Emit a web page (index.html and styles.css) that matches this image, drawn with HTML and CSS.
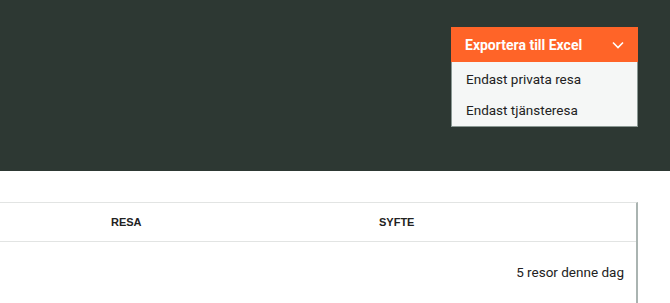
FILE: index.html
```html
<!DOCTYPE html>
<html lang="sv">
<head>
<meta charset="utf-8">
<link rel="stylesheet" href="styles.css">
</head>
<body>
<header class="top">
  <div class="export">
    <button class="export-btn">
      <span>Exportera till Excel</span>
      <svg class="chev" width="12" height="8" viewBox="0 0 12 8"><path d="M1 1.5 L6 6.5 L11 1.5" fill="none" stroke="#fff" stroke-width="1.6"/></svg>
    </button>
    <ul class="menu">
      <li>Endast privata resa</li>
      <li>Endast tjänsteresa</li>
    </ul>
  </div>
</header>
<main class="content">
  <div class="table">
    <div class="thead">
      <div class="th"></div>
      <div class="th">RESA</div>
      <div class="th">SYFTE</div>
    </div>
    <div class="tbody">
      <div class="summary">5 resor denne dag</div>
    </div>
  </div>
</main>
</body>
</html>
```

FILE: styles.css
```css
* { box-sizing: border-box; }
html, body { margin: 0; padding: 0; background: #fff; }
body { font-family: Roboto, "Liberation Sans", Arial, sans-serif; color: #222; }

.top {
  height: 171px;
  background: #2d3833;
  display: flex;
  justify-content: flex-end;
  padding: 27px 32px 0 0;
}
.export { width: 187px; }
.export-btn {
  width: 100%;
  height: 35px;
  background: #ff6428;
  border: 0;
  color: #fff;
  font-family: inherit;
  font-weight: bold;
  font-size: 14px;
  display: flex;
  align-items: center;
  justify-content: space-between;
  padding: 0 14px 0 14px;
  cursor: pointer;
}
.chev { display: block; }
.menu {
  list-style: none;
  margin: 0;
  padding: 2px 0 0;
  background: #f5f7f6;
  border: 1px solid #8a9893;
  border-top: 0;
}
.menu li {
  font-size: 13.5px;
  color: #222;
  padding: 0 14px;
  height: 31px;
  line-height: 31px;
}

.content { padding-top: 31px; }
.table {
  width: 638px;
  border-top: 1px solid #e2e4e3;
  border-right: 2px solid #aab4b1;
}
.thead {
  display: grid;
  grid-template-columns: 111px 268px 1fr;
  height: 39px;
  align-items: center;
  border-bottom: 1px solid #e2e4e3;
}
.th {
  font-family: "Liberation Sans", Arial, sans-serif;
  font-size: 11px;
  font-weight: bold;
  color: #222;
}
.tbody { height: 63px; }
.summary {
  text-align: right;
  font-size: 13.5px;
  padding: 22px 12px 0 0;
}
```
